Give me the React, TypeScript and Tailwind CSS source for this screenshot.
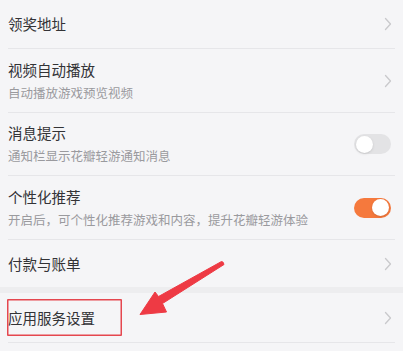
const font = { fontFamily: '"Noto Sans CJK SC", "Noto Sans", sans-serif' };

function Chevron() {
  return (
    <svg width="8" height="14" viewBox="0 0 8 14" fill="none" className="shrink-0">
      <path d="M1.5 1.5 L6.5 7 L1.5 12.5" stroke="#c9c9cc" strokeWidth="1.3" strokeLinecap="round" strokeLinejoin="round" />
    </svg>
  );
}

function Toggle({ on }: { on: boolean }) {
  return (
    <div
      className={
        on
          ? 'w-[37px] h-[20px] rounded-full bg-[#f5793d] flex items-center justify-end px-[2px] shrink-0'
          : 'w-[37px] h-[20px] rounded-full bg-[#e3e3e5] flex items-center justify-start px-[2px] shrink-0'
      }
    >
      <div className="w-[17px] h-[17px] rounded-full bg-white shadow-sm" />
    </div>
  );
}

function Row({
  title, sub, right, h, divider = true,
}: {
  title: string;
  sub?: string;
  right: React.ReactNode;
  h: string;
  divider?: boolean;
}) {
  return (
    <div className={`${h} flex flex-col`}>
      <div className="flex-1 flex items-center pl-[8px] pr-[11px]">
        <div className="flex-1 min-w-0">
          <p className="text-[14.5px] leading-[20px] text-[#333336]">{title}</p>
          {sub && <p className="text-[12.5px] leading-[18px] mt-[4px] text-[#9a9a9e]">{sub}</p>}
        </div>
        {right}
      </div>
      {divider && <div className="mx-[8px] h-px bg-[#e6e6e9]" />}
    </div>
  );
}

export default function App() {
  return (
    <div className="relative w-[403px] h-[351px] overflow-hidden bg-[#f5f5f7]" style={font}>
      <Row h="h-[49px]" title="领奖地址" right={<Chevron />} />
      <Row h="h-[64px]" title="视频自动播放" sub="自动播放游戏预览视频" right={<Chevron />} />
      <Row h="h-[63px]" title="消息提示" sub="通知栏显示花瓣轻游通知消息" right={<div className="mr-[1px]"><Toggle on={false} /></div>} />
      <Row h="h-[64px]" title="个性化推荐" sub="开启后，可个性化推荐游戏和内容，提升花瓣轻游体验" right={<div className="mr-[1px]"><Toggle on /></div>} />
      <Row h="h-[47px]" title="付款与账单" right={<Chevron />} divider={false} />
      <div className="h-[6px] bg-[#ededef]" />
      <Row h="h-[50px]" title="应用服务设置" right={<Chevron />} />

      {/* annotation box */}
      <div className="absolute left-[7px] top-[299px] w-[115px] h-[37px] rounded-[1px] shadow-[inset_0_0_0_1.5px_#e5474f]" />

      {/* annotation arrow */}
      <svg className="absolute left-0 top-0" width="403" height="351" viewBox="0 0 403 351">
        <path
          d="M221.5 261.5 Q223.5 261.5 224 264.5 L162.5 303.5 L166.5 312 L140 314.5 L155 292 L158.5 296.5 Z"
          fill="#ee3a44"
          stroke="#ee3a44"
          strokeWidth="1"
          strokeLinejoin="round"
        />
      </svg>
    </div>
  );
}
